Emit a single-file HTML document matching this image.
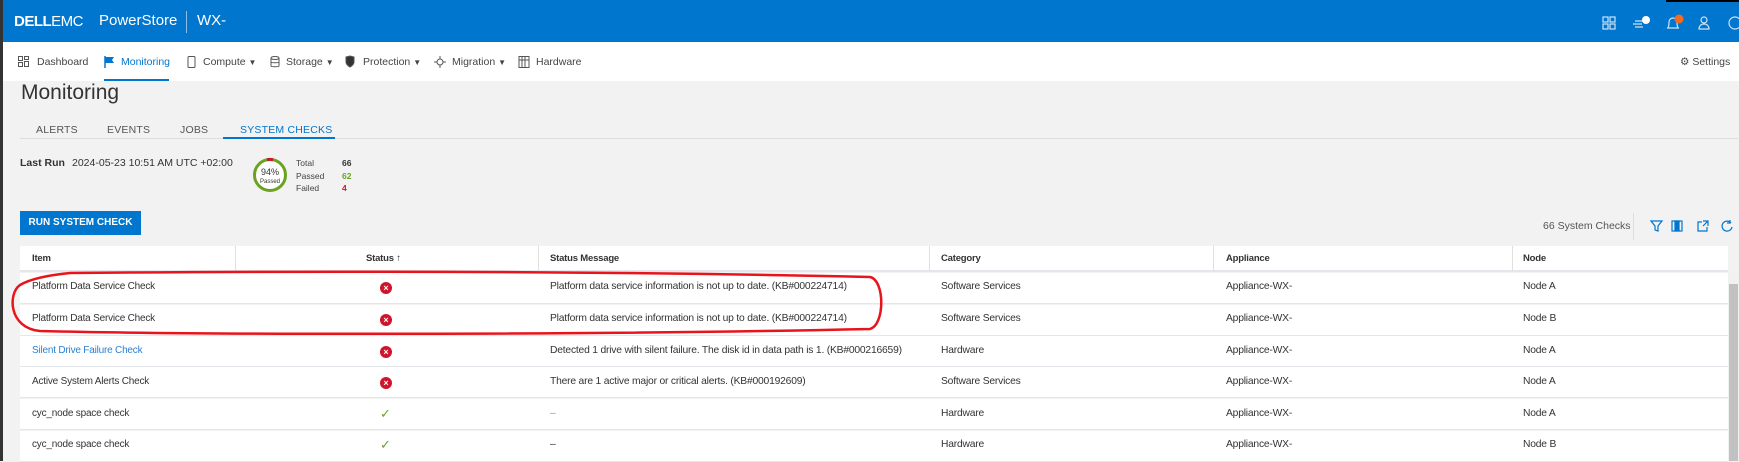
<!DOCTYPE html>
<html><head><meta charset="utf-8"><style>
*{margin:0;padding:0;box-sizing:border-box}
body{width:1739px;height:461px;overflow:hidden;background:#f2f2f2;font-family:"Liberation Sans",sans-serif;color:#333;position:relative;font-size:11px}
.a{position:absolute;white-space:nowrap}
#hdr{left:0;top:0;width:1739px;height:42px;background:#0076ce}
#nav{left:0;top:42px;width:1739px;height:39px;background:#fff}
#lstrip{left:0;top:0;width:3px;height:461px;background:#333}
.nv{top:55px;font-size:10.5px;line-height:14px;color:#444}
.tab{top:124px;font-size:10.5px;color:#555;letter-spacing:.2px}
.row{left:20px;width:1708px;height:31px;background:#fff;border-bottom:1px solid #e3e6ea}
.c{font-size:10.3px;color:#333;letter-spacing:-0.2px}
.x{width:12px;height:12px;border-radius:50%;background:#d0142c;color:#fff;font-size:9px;line-height:12px;text-align:center;font-weight:bold}
</style></head><body>
<div class="a" id="hdr"></div>
<div class="a" style="left:1666px;top:0;width:73px;height:2px;background:#000"></div>
<div class="a" style="left:14px;top:13px;color:#fff;font-size:15px;font-weight:bold;letter-spacing:-0.5px">DELL<span style="font-weight:normal">EMC</span></div>
<div class="a" style="left:99px;top:12px;color:#fff;font-size:15px">PowerStore</div>
<div class="a" style="left:186px;top:11px;width:1px;height:22px;background:#8fbde6"></div>
<div class="a" style="left:197px;top:12px;color:#fff;font-size:15px">WX-</div>
<svg class="a" style="left:1600px;top:14px" width="140" height="18" viewBox="0 0 140 18" fill="none" stroke="#cfe3f5" stroke-width="1.2">
<rect x="3" y="3" width="5" height="5"/><rect x="10" y="3" width="5" height="5"/><rect x="3" y="10" width="5" height="5"/><rect x="10" y="10" width="5" height="5"/>
<path d="M35 7h8M33 10h9M35 13h8"/><circle cx="46" cy="6" r="4" fill="#fff" stroke="none"/>
<path d="M67 14h12M68 14c1-2 1-4 1-6a4 4 0 0 1 8 0c0 2 0 4 1 6"/><circle cx="79" cy="5" r="4.5" fill="#f26b21" stroke="none"/>
<circle cx="104" cy="6" r="3"/><path d="M99 15c0-3 2-5 5-5s5 2 5 5z"/>
<circle cx="135" cy="9" r="6"/>
</svg>
<div class="a" id="nav"></div>
<div class="a" style="left:104px;top:79px;width:65px;height:2px;background:#0076ce"></div>
<svg class="a" style="left:17px;top:55px" width="600" height="14" fill="none" stroke="#555" stroke-width="1">
<rect x="1.5" y="1.5" width="4" height="4"/><rect x="7.5" y="1.5" width="4" height="3"/><rect x="1.5" y="7.5" width="4" height="4"/><rect x="7.5" y="6.5" width="4" height="5"/>
<path d="M88 1v12" stroke="#0076ce" stroke-width="1.5"/><path d="M88 2h9l-2 3 2 3h-9z" fill="#0076ce" stroke="none"/>
<rect x="171" y="1.5" width="7" height="11" rx="1"/>
<ellipse cx="258" cy="3" rx="4" ry="1.5"/><path d="M254 3v8c0 1 8 1 8 0V3M254 7c0 1 8 1 8 0"/>
<path d="M329 2l4-1 4 1v5c0 3-4 5-4 5s-4-2-4-5z" fill="#333"/>
<circle cx="423" cy="7" r="3"/><path d="M423 1v3M423 10v3M417 7h3M426 7h3"/>
<rect x="502" y="1.5" width="10" height="11"/><path d="M505 2v10M508 2v10M502 5h10"/>
</svg>
<div class="a nv" style="left:37px">Dashboard</div>
<div class="a nv" style="left:121px;color:#0076ce">Monitoring</div>
<div class="a nv" style="left:203px">Compute <span style="font-size:8px">▼</span></div>
<div class="a nv" style="left:286px">Storage <span style="font-size:8px">▼</span></div>
<div class="a nv" style="left:363px">Protection <span style="font-size:8px">▼</span></div>
<div class="a nv" style="left:452px">Migration <span style="font-size:8px">▼</span></div>
<div class="a nv" style="left:536px">Hardware</div>
<div class="a nv" style="left:1680px">⚙ Settings</div>
<div class="a" id="lstrip"></div>
<div class="a" style="left:21px;top:81px;font-size:21px;color:#333">Monitoring</div>
<div class="a tab" style="left:36px">ALERTS</div>
<div class="a tab" style="left:107px">EVENTS</div>
<div class="a tab" style="left:180px">JOBS</div>
<div class="a tab" style="left:240px;color:#0076ce">SYSTEM CHECKS</div>
<div class="a" style="left:20px;top:138px;width:1718px;height:1px;background:#ddd"></div>
<div class="a" style="left:223px;top:137px;width:112px;height:2px;background:#0076ce"></div>
<div class="a" style="left:20px;top:157px;font-size:10.5px;font-weight:bold;color:#333">Last Run</div>
<div class="a" style="left:72px;top:157px;font-size:10.5px;color:#333">2024-05-23 10:51 AM UTC +02:00</div>
<svg class="a" style="left:252px;top:157px" width="36" height="36"><circle cx="18" cy="18" r="15.5" fill="#fff" stroke="#6aa320" stroke-width="3"/><path d="M15 2.7A15.5 15.5 0 0 1 21 2.7" stroke="#d0142c" stroke-width="3" fill="none"/>
<text x="18" y="18" font-size="9" text-anchor="middle" fill="#333" font-family="Liberation Sans">94%</text><text x="18" y="26" font-size="6" text-anchor="middle" fill="#333" font-family="Liberation Sans">Passed</text></svg>
<div class="a" style="left:296px;top:157px;font-size:8.5px;line-height:12.5px;color:#444">Total<br>Passed<br>Failed</div>
<div class="a" style="left:342px;top:157px;font-size:8.5px;line-height:12.5px;font-weight:bold"><span style="color:#333">66</span><br><span style="color:#6aa320">62</span><br><span style="color:#d0142c">4</span></div>
<div class="a" style="left:20px;top:211px;width:121px;height:24px;background:#0076ce;color:#fff;font-size:10px;font-weight:bold;line-height:24px;text-align:center">RUN SYSTEM CHECK</div>
<div class="a" style="left:1543px;top:220px;font-size:10.5px;color:#555">66 System Checks</div>
<div class="a" style="left:1633px;top:213px;width:1px;height:27px;background:#ddd"></div>
<svg class="a" style="left:1650px;top:219px" width="85" height="14" fill="none" stroke="#0076ce" stroke-width="1.2">
<path d="M1 2h11l-4 5v5l-3-1V7z"/><rect x="22" y="2" width="10" height="10"/><rect x="25" y="2" width="4" height="10" fill="#0076ce"/>
<path d="M52 3h-4v9h9V8M53 2h5v5M58 2l-5 5"/><path d="M81 4a5 5 0 1 0 1 4M80 1v3h-3"/>
</svg>
<div class="a" style="left:20px;top:246px;width:1708px;height:26px;background:#fff;border-bottom:2px solid #e3e6ea"></div>
<div class="a" style="left:235px;top:246px;width:1px;height:25px;background:#e0e0e0"></div>
<div class="a" style="left:538px;top:246px;width:1px;height:25px;background:#e0e0e0"></div>
<div class="a" style="left:929px;top:246px;width:1px;height:25px;background:#e0e0e0"></div>
<div class="a" style="left:1213px;top:246px;width:1px;height:25px;background:#e0e0e0"></div>
<div class="a" style="left:1512px;top:246px;width:1px;height:25px;background:#e0e0e0"></div>
<div class="a c" style="left:32px;top:253px;font-weight:bold;font-size:9.5px">Item</div>
<div class="a c" style="left:366px;top:253px;font-weight:bold;font-size:9.5px">Status ↑</div>
<div class="a c" style="left:550px;top:253px;font-weight:bold;font-size:9.5px">Status Message</div>
<div class="a c" style="left:941px;top:253px;font-weight:bold;font-size:9.5px">Category</div>
<div class="a c" style="left:1226px;top:253px;font-weight:bold;font-size:9.5px">Appliance</div>
<div class="a c" style="left:1523px;top:253px;font-weight:bold;font-size:9.5px">Node</div>

<div class="a row" style="top:273px"></div><div class="a row" style="top:305px"></div><div class="a row" style="top:336px"></div><div class="a row" style="top:367px"></div><div class="a row" style="top:399px"></div><div class="a row" style="top:431px"></div>

<div class="a c" style="left:32px;top:281px;font-size:10px">Platform Data Service Check</div>
<div class="a x" style="left:380px;top:282px">×</div>
<div class="a c" style="left:550px;top:281px">Platform data service information is not up to date. (KB#000224714)</div>
<div class="a c" style="left:941px;top:281px">Software Services</div><div class="a c" style="left:1226px;top:281px">Appliance-WX-</div><div class="a c" style="left:1523px;top:281px">Node A</div>

<div class="a c" style="left:32px;top:313px;font-size:10px">Platform Data Service Check</div>
<div class="a x" style="left:380px;top:314px">×</div>
<div class="a c" style="left:550px;top:313px">Platform data service information is not up to date. (KB#000224714)</div>
<div class="a c" style="left:941px;top:313px">Software Services</div><div class="a c" style="left:1226px;top:313px">Appliance-WX-</div><div class="a c" style="left:1523px;top:313px">Node B</div>

<div class="a c" style="left:32px;top:345px;color:#2a7fd4;font-size:10px">Silent Drive Failure Check</div>
<div class="a x" style="left:380px;top:346px">×</div>
<div class="a c" style="left:550px;top:345px">Detected 1 drive with silent failure. The disk id in data path is 1. (KB#000216659)</div>
<div class="a c" style="left:941px;top:345px">Hardware</div><div class="a c" style="left:1226px;top:345px">Appliance-WX-</div><div class="a c" style="left:1523px;top:345px">Node A</div>

<div class="a c" style="left:32px;top:376px;font-size:10px">Active System Alerts Check</div>
<div class="a x" style="left:380px;top:377px">×</div>
<div class="a c" style="left:550px;top:376px">There are 1 active major or critical alerts. (KB#000192609)</div>
<div class="a c" style="left:941px;top:376px">Software Services</div><div class="a c" style="left:1226px;top:376px">Appliance-WX-</div><div class="a c" style="left:1523px;top:376px">Node A</div>

<div class="a c" style="left:32px;top:408px;font-size:10px">cyc_node space check</div>
<div class="a" style="left:380px;top:406px;color:#6aa320;font-size:13px">✓</div>
<div class="a c" style="left:550px;top:408px;color:#999">–</div>
<div class="a c" style="left:941px;top:408px">Hardware</div><div class="a c" style="left:1226px;top:408px">Appliance-WX-</div><div class="a c" style="left:1523px;top:408px">Node A</div>

<div class="a c" style="left:32px;top:439px;font-size:10px">cyc_node space check</div>
<div class="a" style="left:380px;top:437px;color:#6aa320;font-size:13px">✓</div>
<div class="a c" style="left:550px;top:439px">–</div>
<div class="a c" style="left:941px;top:439px">Hardware</div><div class="a c" style="left:1226px;top:439px">Appliance-WX-</div><div class="a c" style="left:1523px;top:439px">Node B</div>

<div class="a" style="left:1728px;top:273px;width:11px;height:188px;background:#f1f1f1"></div>
<div class="a" style="left:1729px;top:284px;width:9px;height:177px;background:#c1c1c1"></div>
<svg class="a" style="left:0;top:265px" width="900" height="80"><path d="M70 8C300 6 600 6 870 12C885 15 885 60 870 64C600 70 200 70 40 66C8 63 8 28 20 20C30 14 50 10 70 8Z" fill="none" stroke="#e8141c" stroke-width="2.5"/></svg>
</body></html>
